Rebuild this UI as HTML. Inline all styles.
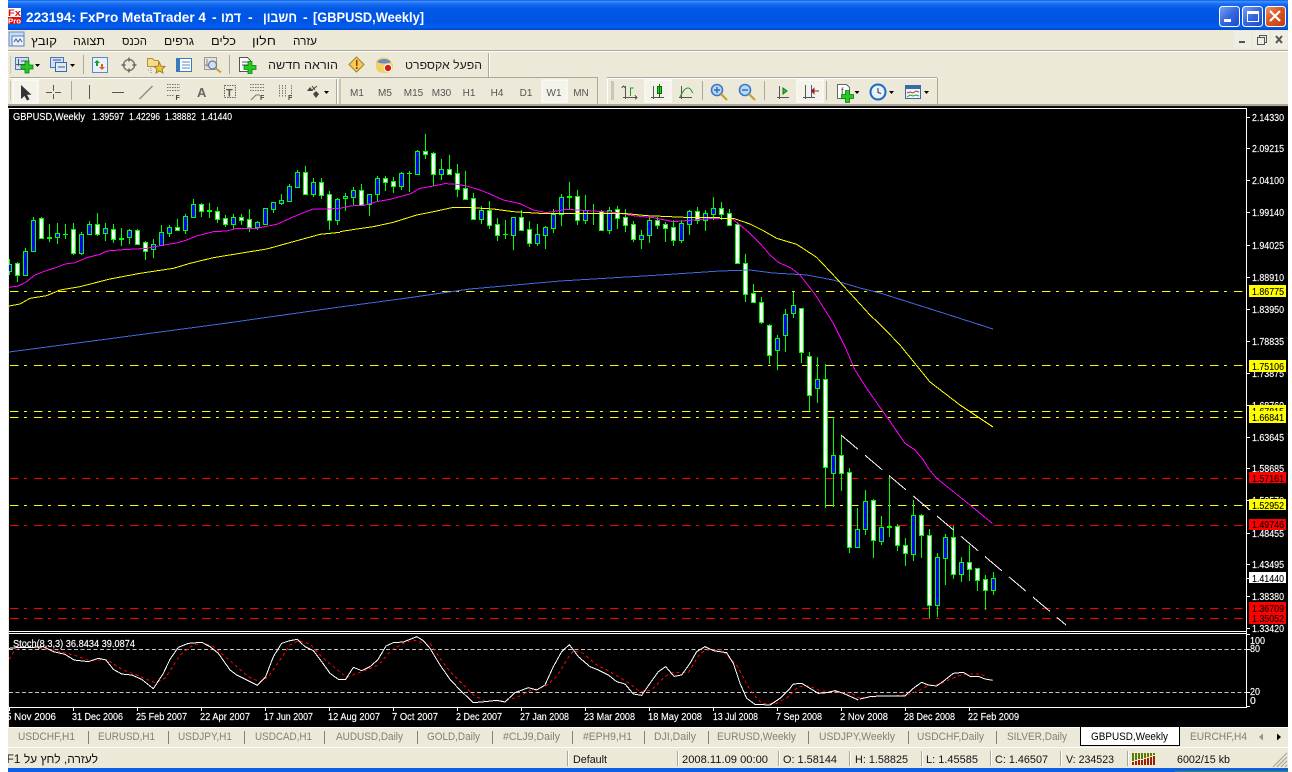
<!DOCTYPE html>
<html lang="he"><head><meta charset="utf-8"><title>MetaTrader 4</title>
<style>
html,body{margin:0;padding:0;background:#fff;width:1292px;height:772px;overflow:hidden}
svg{display:block;font-family:"Liberation Sans","Noto Sans CJK JP",sans-serif}
.ax text,.ax{font-size:10.5px;fill:#fff;stroke:#fff;stroke-width:.15px}
.tg text{font-size:10.5px;fill:#000;stroke:#000;stroke-width:.1px}
.lb{stroke:#fff;stroke-width:.15px}
.tb{font-size:11px;fill:#808078}
.st{font-size:11px;fill:#111}
.pr{font-size:10px;fill:#555}
.mn{font-size:12px;fill:#111}
.c{shape-rendering:crispEdges}
</style></head><body>
<svg width="1292" height="772" viewBox="0 0 1292 772" xmlns="http://www.w3.org/2000/svg">
<defs>
<linearGradient id="tg" x1="0" y1="0" x2="0" y2="1"><stop offset="0" stop-color="#0a58e0"/><stop offset=".05" stop-color="#3d93ff"/><stop offset=".13" stop-color="#1a6cf0"/><stop offset=".3" stop-color="#0058e6"/><stop offset=".75" stop-color="#0054e3"/><stop offset=".88" stop-color="#0060f4"/><stop offset="1" stop-color="#0347c8"/></linearGradient>
<linearGradient id="bb" x1="0" y1="0" x2="1" y2="1"><stop offset="0" stop-color="#7ba3f0"/><stop offset=".5" stop-color="#3566e0"/><stop offset="1" stop-color="#1a48c8"/></linearGradient>
<linearGradient id="br" x1="0" y1="0" x2="1" y2="1"><stop offset="0" stop-color="#e8a070"/><stop offset=".4" stop-color="#dc5a28"/><stop offset="1" stop-color="#c03a10"/></linearGradient>
<clipPath id="cc"><rect x="9" y="110" width="1237" height="521"/></clipPath>
<clipPath id="cs"><rect x="9" y="634" width="1237" height="73"/></clipPath>
<clipPath id="cl"><rect x="8" y="708" width="1240" height="18"/></clipPath>
<clipPath id="cst"><rect x="8" y="749" width="540" height="19"/></clipPath>
<g id="plus"><path d="M4 0h4v4h4v4H8v4H4V8H0V4h4z" fill="#22cc22" stroke="#0f7a0f" stroke-width=".8"/></g>
<path id="caret" d="M0 0h5l-2.500 3z" fill="#000"/>
</defs>

<!-- window -->
<rect x="8" y="0" width="1280" height="772" fill="#ece9d8"/>
<rect x="8" y="0" width="1280" height="30" fill="url(#tg)"/>
<!-- app icon -->
<rect x="8" y="8" width="13" height="16" fill="#fff"/>
<text x="8" y="16" font-size="9" font-weight="bold" fill="#e01010" textLength="13" lengthAdjust="spacingAndGlyphs">Fx</text>
<rect x="8" y="17" width="13" height="7" fill="#e01010"/>
<text x="8" y="23.500" font-size="7" font-weight="bold" fill="#fff" textLength="13" lengthAdjust="spacingAndGlyphs">Pro</text>
<!-- title -->
<g fill="#fff" font-weight="bold" font-size="14">
<text x="26" y="22" textLength="180" lengthAdjust="spacingAndGlyphs">223194: FxPro MetaTrader 4</text>
<text x="212" y="22">-</text>
<text x="221" y="22" textLength="20" lengthAdjust="spacingAndGlyphs">דמו</text>
<text x="248" y="22">-</text>
<text x="263" y="22" textLength="34" lengthAdjust="spacingAndGlyphs">חשבון</text>
<text x="303" y="22">-</text>
<text x="313" y="22" textLength="111" lengthAdjust="spacingAndGlyphs">[GBPUSD,Weekly]</text>
</g>
<!-- window buttons -->
<rect x="1219.500" y="6.500" width="20" height="20" rx="3" fill="url(#bb)" stroke="#fff"/>
<rect x="1224" y="19" width="7" height="3" fill="#fff"/>
<rect x="1242.500" y="6.500" width="20" height="20" rx="3" fill="url(#bb)" stroke="#fff"/>
<path d="M1247.500 11.500h11v10h-11z" fill="none" stroke="#fff"/><rect x="1247" y="11" width="12" height="3" fill="#fff"/>
<rect x="1265.500" y="6.500" width="20" height="20" rx="3" fill="url(#br)" stroke="#fff"/>
<path d="M1270 11l10 10M1280 11l-10 10" stroke="#fff" stroke-width="2.200"/>

<!-- menu -->
<g>
<rect x="9" y="32" width="15" height="14" fill="#c8daf4" stroke="#6a8fc8"/><rect x="12" y="36" width="12" height="10" fill="#e8f0fa" stroke="#5b7fb8"/><path d="M14 42l2-3 2 3 2-3 2 3" stroke="#3a5a98" fill="none"/>
</g>
<g class="mn">
<text x="31" y="45" textLength="26" lengthAdjust="spacingAndGlyphs">קובץ</text>
<text x="73" y="45" textLength="32" lengthAdjust="spacingAndGlyphs">תצוגה</text>
<text x="122" y="45" textLength="25" lengthAdjust="spacingAndGlyphs">הכנס</text>
<text x="164" y="45" textLength="30" lengthAdjust="spacingAndGlyphs">גרפים</text>
<text x="211" y="45" textLength="25" lengthAdjust="spacingAndGlyphs">כלים</text>
<text x="252" y="45" textLength="24" lengthAdjust="spacingAndGlyphs">חלון</text>
<text x="293" y="45" textLength="24" lengthAdjust="spacingAndGlyphs">עזרה</text>
</g>
<!-- MDI buttons -->
<g class="c">
<rect x="1234" y="31" width="17" height="17" fill="#f0eee2"/><rect x="1253" y="31" width="16" height="17" fill="#f0eee2"/><rect x="1271" y="31" width="16" height="17" fill="#f0eee2"/>
<rect x="1239" y="41" width="6" height="2" fill="#555"/>
<path d="M1257.500 37.500h7v7h-7zM1259.500 37.500v-2h7v7h-2" fill="none" stroke="#555"/>
</g>
<path d="M1276 36l6 7M1282 36l-6 7" stroke="#555" stroke-width="2"/>

<!-- toolbar separators -->
<g class="c">
<rect x="8" y="50" width="1280" height="1" fill="#aca899"/><rect x="8" y="51" width="1280" height="1" fill="#fff"/>
<rect x="10" y="77" width="478" height="1" fill="#aca899"/><rect x="10" y="78" width="328" height="1" fill="#fff"/>
<rect x="488" y="53" width="1" height="24" fill="#aca899"/><rect x="489" y="53" width="1" height="24" fill="#fff"/>
<rect x="607" y="77" width="330" height="1" fill="#aca899"/><rect x="607" y="78" width="330" height="1" fill="#fff"/>
<rect x="336" y="79" width="1" height="25" fill="#aca899"/><rect x="337" y="79" width="1" height="25" fill="#fff"/>
<rect x="339" y="79" width="2" height="25" fill="#c9c6b6"/>
<rect x="339" y="77" width="259" height="1" fill="#aca899"/>
<rect x="597" y="78" width="1" height="26" fill="#aca899"/><rect x="607" y="78" width="1" height="26" fill="#fff"/>
<rect x="937" y="78" width="1" height="26" fill="#aca899"/>
<rect x="611" y="81" width="3" height="19" fill="#c9c6b6"/>
<rect x="10" y="56" width="1" height="18" fill="#c9c6b6"/><rect x="10" y="81" width="1" height="19" fill="#c9c6b6"/>
<rect x="83" y="55" width="1" height="19" fill="#aca899"/><rect x="229" y="55" width="1" height="19" fill="#aca899"/>
<rect x="71" y="81" width="1" height="19" fill="#aca899"/>
<rect x="702" y="81" width="1" height="19" fill="#aca899"/><rect x="764" y="81" width="1" height="19" fill="#aca899"/><rect x="826" y="81" width="1" height="19" fill="#aca899"/>
<rect x="8" y="104" width="1280" height="2" fill="#aca899"/>
<rect x="8" y="106" width="1280" height="2" fill="#111"/>
<!-- selected buttons -->
<rect x="13" y="80" width="25" height="23" fill="#f4f3ea" stroke="#fff"/>
<rect x="542" y="80" width="25" height="22" fill="#f4f3ea" stroke="#fff"/>
<rect x="645" y="80" width="26" height="22" fill="#f4f3ea" stroke="#fff"/>
<rect x="797" y="80" width="26" height="22" fill="#f4f3ea" stroke="#fff"/>
</g>

<!-- toolbar 1 icons -->
<g>
<rect x="15.500" y="57.500" width="13" height="12" fill="#cfe0f6" stroke="#4a78b8"/><path d="M18.500 59v7M16 64.500h10M21 61h6" stroke="#4a5a70" fill="none"/>
<use href="#plus" x="21" y="61"/>
<use href="#caret" x="35" y="64"/>
<rect x="50.500" y="57.500" width="13" height="10" fill="#cfe0f6" stroke="#4a78b8"/><rect x="55.500" y="62.500" width="11" height="9" fill="#dfeaf8" stroke="#3a68a8"/><path d="M53 60h8M58 67h7" stroke="#4a5a70"/>
<use href="#caret" x="70" y="64"/>
<rect x="92.500" y="57.500" width="15" height="15" fill="#e8f0fa" stroke="#5b8ac8"/><path d="M97 60l3 3h-2v3h-2v-3h-2z" fill="#18a018"/><path d="M102 70l-3-3h2v-3h2v3h2z" fill="#e06020"/>
<circle cx="129" cy="65" r="5.500" fill="none" stroke="#777" stroke-width="1.500"/><path d="M129 57.500v4M129 68.500v4M121.500 65h4M132.500 65h4" stroke="#666" stroke-width="1.500"/>
<path d="M147.500 58.500h5l2 2h4v6h-11z" fill="#f4dc8a" stroke="#b09040"/><path d="M151 68v5M148 70h2" stroke="#888" stroke-dasharray="1 1"/>
<path d="M159.500 62.500L161 66.300 165 66.500 162 69.300 163 73 159.500 71 156 73 157 69.300 154 66.500 158 66.300z" fill="#f0c840" stroke="#a08020"/>
<rect x="176.500" y="58.500" width="15" height="13" fill="#fff" stroke="#3a78c0"/><rect x="177" y="59" width="3" height="12" fill="#3a78c0"/><path d="M182 62h8M182 65h8M182 68h8" stroke="#5a88c8"/>
<rect x="204.500" y="57.500" width="12" height="12" fill="#e6e6e0" stroke="#999"/><path d="M207 59v8M205 65h10" stroke="#888"/><circle cx="212.500" cy="65" r="4" fill="#cfe0f6" stroke="#6a7a90" stroke-width="1.200"/><path d="M216 68.500l5 4" stroke="#c8a030" stroke-width="2"/>
<path d="M239.500 57.500h8l3 3v11h-11z" fill="#fff" stroke="#555"/><path d="M242 62h6M242 65h6" stroke="#555"/><use href="#plus" x="244" y="61.500"/>
<text x="268" y="69" font-size="11.500" fill="#222" textLength="70" lengthAdjust="spacingAndGlyphs">הוראה חדשה</text>
<path d="M356.500 57l7.500 7.500-7.500 7.500-7.500-7.500z" fill="#f4cc50" stroke="#a08030"/><rect x="356" y="60" width="1.500" height="6" fill="#a03010"/><rect x="356" y="67" width="1.500" height="2" fill="#a03010"/>
<path d="M376 62c2-6 13-6 15 0l2 2v4c-1 4-4 5-8 5s-8-1-9-5z" fill="#f0d068"/><path d="M377 62c3-4 11-4 14 0-4 2-10 2-14 0z" fill="#6a8ac8"/><circle cx="388" cy="68" r="3.700" fill="#d02010" stroke="#fff" stroke-width="1"/>
<text x="405" y="69" font-size="11.500" fill="#222" textLength="77" lengthAdjust="spacingAndGlyphs">הפעל אקספרט</text>
</g>

<!-- toolbar 2 icons -->
<g>
<path d="M21 85v14l3.500-3 2.500 4.500 2.500-1.300-2.500-4.500h4.500z" fill="#333"/>
<path d="M53.500 85v6M53.500 94v5M46 92.500h6M55 92.500h6" stroke="#555" fill="none" class="c"/>
<path d="M89.500 85v14" stroke="#555" stroke-width="1.300" class="c"/>
<path d="M112 92.500h12" stroke="#555" stroke-width="1.300" class="c"/>
<path d="M139.500 99l13-13" stroke="#888" stroke-width="1.300"/>
<path d="M167 84.500h13M167 87.500h13M167 90.500h13M167 95.500h7" stroke="#777" stroke-dasharray="1.500 1" class="c"/>
<text x="175.500" y="100" font-size="7" font-weight="bold" fill="#444">F</text>
<text x="197" y="97" font-size="13" font-weight="bold" fill="#666">A</text>
<rect x="224.500" y="85.500" width="11" height="12" fill="none" stroke="#666" stroke-dasharray="1.500 1" class="c"/>
<text x="226" y="96.500" font-size="11" font-weight="bold" fill="#555">T</text>
<path d="M250 84.500h15M250 87.500h15M250 90.500h15" stroke="#777" stroke-dasharray="1.500 1" class="c"/><path d="M251 100l5-5 4 0" stroke="#777" fill="none"/>
<text x="260" y="100" font-size="7" font-weight="bold" fill="#444">F</text>
<path d="M279.500 85v12M282.500 85v12M285.500 85v12M291.500 85v12" stroke="#777" stroke-dasharray="1.500 1" class="c"/>
<text x="288" y="100" font-size="7" font-weight="bold" fill="#444">F</text>
<path d="M307 91l3-4 3 4zM313 94l3 4 3-4-3-3z" fill="#444"/><path d="M312 86l3 4M312 90l5-4" stroke="#444"/>
<use href="#caret" x="324" y="91"/>
</g>
<g class="pr" text-anchor="middle">
<text x="357" y="96">M1</text><text x="385" y="96">M5</text><text x="413.500" y="96">M15</text><text x="441.500" y="96">M30</text><text x="469" y="96">H1</text><text x="497" y="96">H4</text><text x="526" y="96">D1</text><text x="554" y="96">W1</text><text x="581" y="96">MN</text>
</g>

<!-- toolbar 3 icons -->
<g fill="none" stroke="#555">
<path d="M625.500 86v13M623 97.500h13M621.500 88l2-2 2 2M635 95.500l2 2-2 2" class="c"/>
<path d="M630.500 96v-8h3" stroke="#18a018" stroke-width="1.300" class="c"/>
<path d="M653.500 86v13M651 97.500h13" class="c"/><rect x="657.500" y="86.500" width="4" height="7" fill="#2fd02f" stroke="#0a6a0a" class="c"/><path d="M659.500 84v13" stroke="#0a6a0a" class="c"/>
<path d="M681.500 86v13M679 97.500h13" class="c"/><path d="M680 97c3-6 5-9 8-9s3 3 5 5" stroke="#2a9a2a"/>
<path d="M779.500 86v13M777 97.500h12" class="c"/><path d="M783 88v6l4-3z" fill="#2fd02f" stroke="#0a7a0a"/>
<path d="M805.500 85v14M803 97.500h12" class="c"/><path d="M811.500 85v13" stroke="#3a5aa8" class="c"/><path d="M819 91l-5 0M814 88.500v5l-2.500-2.500z" stroke="#a02010" fill="#a02010"/>
</g>
<g>
<circle cx="717" cy="90" r="5.500" fill="#bcd6f4" stroke="#3a78c8" stroke-width="1.600"/><path d="M714 90h6M717 87v6" stroke="#2a68b8" stroke-width="1.400"/><path d="M721 94l6 6" stroke="#c8a030" stroke-width="2.200"/>
<circle cx="745" cy="90" r="5.500" fill="#bcd6f4" stroke="#3a78c8" stroke-width="1.600"/><path d="M742 90h6" stroke="#2a68b8" stroke-width="1.400"/><path d="M749 94l6 6" stroke="#c8a030" stroke-width="2.200"/>
<path d="M837.500 84.500h9l3 3v11h-12z" fill="#fff" stroke="#666"/><text x="841" y="94" font-size="9" fill="#444">f</text><use href="#plus" x="841.500" y="90.500"/>
<use href="#caret" x="854.500" y="91"/>
<circle cx="878" cy="92" r="7.500" fill="#e8f0fa" stroke="#1a68c8" stroke-width="2"/><path d="M878 88v4.500l3 1" stroke="#333" fill="none"/>
<use href="#caret" x="889" y="91"/>
<rect x="905.500" y="85.500" width="15" height="13" fill="#eef4fb" stroke="#3a68a8"/><rect x="906" y="86" width="14" height="3" fill="#3a68a8"/><path d="M907 93l3-1 3 1 3-2 3 1" stroke="#b04020" fill="none"/><path d="M907 97l3-2 3 1 3-1 3 1" stroke="#2a9a2a" fill="none"/>
<use href="#caret" x="924" y="91"/>
</g>

<!-- chart -->
<rect x="9" y="107" width="1279" height="620" fill="#000"/>
<g class="c" fill="#fff">
<rect x="9" y="108" width="1238" height="1"/>
<rect x="9" y="631" width="1238" height="1"/>
<rect x="9" y="633" width="1238" height="1"/>
<rect x="9" y="707" width="1238" height="1"/>
<rect x="1246" y="108" width="1" height="600"/>
</g>

<g clip-path="url(#cc)" class="c" fill="none" stroke-width="1">
<!-- horizontal levels -->
<g stroke-dasharray="3 7 8.500 5.500" stroke-dashoffset="9">
<path d="M9 291.500H1246M9 365.500H1246M9 411.500H1246M9 417.500H1246M9 505.500H1246" stroke="#ffff00"/>
<path d="M9 478.500H1246M9 525.500H1246M9 608.500H1246M9 618.500H1246" stroke="#ff0000"/>
</g>
<!-- wicks -->
<path stroke="#00ff00" d="M9.500 259V275M17.500 262V282M25.500 248V276M33.500 217V252M41.500 217V238M49.500 224V242M57.500 223V244M65.500 224V239M73.500 223V255M81.500 232V255M89.500 221V235M97.500 213V236M105.500 223V241M113.500 224V243M121.500 228V246M129.500 229V244M137.500 229V244M145.500 241V260M153.500 239V258M161.500 225V246M169.500 225V237M177.500 219V231M185.500 214V234M193.500 199V218M201.500 203V217M209.500 203V218M217.500 207V223M225.500 215V227M233.500 214V229M241.500 214V225M249.500 209V232M257.500 221V230M265.500 208V224M273.500 202V213M281.500 194V205M289.500 184V202M297.500 170V188M305.500 166V194M313.500 178V197M321.500 178V199M329.500 191V230M337.500 198V225M345.500 193V211M353.500 187V205M361.500 184V205M369.500 194V216M377.500 176V202M385.500 176V191M393.500 177V193M401.500 172V190M409.500 171V192M417.500 150V175M425.500 134V159M433.500 152V186M441.500 159V180M449.500 155V174M457.500 164V197M465.500 171V199M473.500 193V220M481.500 206V224M489.500 201V229M497.500 218V241M505.500 220V239M513.500 217V250M521.500 210V230M529.500 221V247M537.500 224V246M545.500 226V249M553.500 209V233M561.500 194V226M569.500 182V209M577.500 190V225M585.500 195V224M593.500 204V225M601.500 210V230M609.500 207V234M617.500 206V229M625.500 209V232M633.500 221V242M641.500 230V249M649.500 218V243M657.500 217V229M665.500 222V242M673.500 220V246M681.500 220V243M689.500 210V235M697.500 207V224M705.500 210V231M713.500 197V220M721.500 202V220M729.500 209V225M737.500 222V264M745.500 254V302M753.500 284V302M761.500 297V324M769.500 324V364M777.500 335V370M785.500 309V352M793.500 292V318M801.500 308V363M809.500 352V411M817.500 357V403M825.500 364V508M833.500 417V507M841.500 435V491M849.500 468V553M857.500 508V547M865.500 490V535M873.500 499V558M881.500 516V545M889.500 476V537M897.500 524V551M905.500 538V566M913.500 500V561M921.500 514V558M929.500 529V618M937.500 553V617M945.500 534V585M953.500 526V579M961.500 557V582M969.500 545V581M977.500 568V591M985.500 575V610M993.500 572V595"/>
<!-- white bodies -->
<path stroke="#00ff00" fill="#fff" d="M15.500 263.500h4v12h-4zM39.500 218.500h4v20h-4zM71.500 229.500h4v24h-4zM95.500 224.500h4v10h-4zM111.500 229.500h4v10h-4zM135.500 230.500h4v14h-4zM143.500 242.500h4v9h-4zM175.500 227.500h4v3h-4zM199.500 204.500h4v7h-4zM215.500 211.500h4v8h-4zM223.500 218.500h4v6h-4zM239.500 217.500h4v3h-4zM247.500 219.500h4v8h-4zM303.500 172.500h4v22h-4zM319.500 182.500h4v13h-4zM327.500 194.500h4v26h-4zM359.500 190.500h4v15h-4zM383.500 178.500h4v4h-4zM391.500 181.500h4v5h-4zM423.500 151.500h4v3h-4zM431.500 153.500h4v21h-4zM447.500 169.500h4v5h-4zM455.500 173.500h4v16h-4zM463.500 188.500h4v11h-4zM471.500 198.500h4v21h-4zM487.500 210.500h4v15h-4zM495.500 224.500h4v11h-4zM519.500 217.500h4v13h-4zM527.500 229.500h4v14h-4zM575.500 196.500h4v24h-4zM599.500 211.500h4v19h-4zM615.500 209.500h4v9h-4zM623.500 217.500h4v8h-4zM631.500 224.500h4v15h-4zM655.500 220.500h4v5h-4zM663.500 224.500h4v4h-4zM671.500 227.500h4v13h-4zM695.500 211.500h4v9h-4zM719.500 208.500h4v6h-4zM727.500 213.500h4v12h-4zM735.500 224.500h4v39h-4zM743.500 263.500h4v31h-4zM751.500 293.500h4v9h-4zM759.500 302.500h4v20h-4zM767.500 325.500h4v30h-4zM799.500 308.500h4v44h-4zM807.500 356.500h4v39h-4zM823.500 379.500h4v88h-4zM839.500 455.500h4v18h-4zM847.500 472.500h4v75h-4zM871.500 500.500h4v40h-4zM895.500 526.500h4v19h-4zM903.500 545.500h4v8h-4zM919.500 515.500h4v20h-4zM927.500 535.500h4v70h-4zM951.500 537.500h4v37h-4zM967.500 562.500h4v7h-4zM975.500 568.500h4v12h-4zM983.500 579.500h4v11h-4z"/>
<!-- blue bodies -->
<path stroke="#00ff00" fill="#0000ff" d="M7.500 264.500h4v7h-4zM23.500 251.500h4v24h-4zM31.500 220.500h4v31h-4zM55.500 233.500h4v4h-4zM79.500 234.500h4v19h-4zM87.500 224.500h4v10h-4zM103.500 228.500h4v5h-4zM127.500 230.500h4v7h-4zM151.500 244.500h4v5h-4zM159.500 232.500h4v13h-4zM167.500 227.500h4v6h-4zM183.500 216.500h4v14h-4zM191.500 204.500h4v13h-4zM231.500 217.500h4v7h-4zM255.500 222.500h4v5h-4zM263.500 208.500h4v16h-4zM271.500 202.500h4v7h-4zM279.500 200.500h4v3h-4zM287.500 186.500h4v15h-4zM295.500 172.500h4v15h-4zM311.500 182.500h4v12h-4zM335.500 199.500h4v21h-4zM343.500 196.500h4v2h-4zM351.500 190.500h4v7h-4zM367.500 194.500h4v10h-4zM375.500 178.500h4v16h-4zM399.500 173.500h4v13h-4zM415.500 151.500h4v23h-4zM439.500 169.500h4v5h-4zM479.500 210.500h4v9h-4zM511.500 217.500h4v18h-4zM535.500 234.500h4v9h-4zM543.500 227.500h4v8h-4zM551.500 214.500h4v14h-4zM559.500 197.500h4v17h-4zM583.500 210.500h4v10h-4zM607.500 210.500h4v20h-4zM639.500 235.500h4v4h-4zM647.500 220.500h4v15h-4zM679.500 223.500h4v17h-4zM687.500 211.500h4v13h-4zM703.500 213.500h4v7h-4zM711.500 208.500h4v6h-4zM775.500 338.500h4v12h-4zM783.500 314.500h4v21h-4zM791.500 305.500h4v8h-4zM815.500 379.500h4v9h-4zM831.500 455.500h4v18h-4zM855.500 529.500h4v18h-4zM863.500 501.500h4v28h-4zM879.500 527.500h4v14h-4zM911.500 515.500h4v39h-4zM935.500 557.500h4v48h-4zM943.500 537.500h4v21h-4zM959.500 562.500h4v12h-4zM991.500 578.500h4v12h-4z"/>
<!-- doji -->
<g fill="#00ff00" stroke="none"><rect x="47" y="237" width="5" height="2"/><rect x="63" y="234" width="5" height="1"/><rect x="119" y="238" width="5" height="2"/><rect x="207" y="210" width="5" height="2"/><rect x="407" y="173" width="5" height="1"/><rect x="503" y="234" width="5" height="1"/><rect x="567" y="196" width="5" height="2"/><rect x="887" y="526" width="5" height="2"/></g>
<!-- MA blue -->
<polyline stroke="#4169e1" points="9,352 100,340 220,324 340,307 400,299 470,289 560,281 660,275 720,271 750,270 773,273 807,275 833,280 860,288 880,293 940,312 993,329"/>
<!-- MA magenta -->
<g stroke="#ff00ff" stroke-width="3" transform="translate(0,105) scale(.33333)"><polyline points="27,547 55,543 80,530 105,510 130,500 170,487 195,477 225,473 260,458 300,448 320,438 370,434 440,430 480,422 530,414 560,405 590,393 640,380 680,378 710,370 770,370 830,358 870,340 900,327 940,312 985,312 1020,310"/></g>
<g stroke="#ff00ff" stroke-width="3" transform="translate(340,125) scale(.33333)"><polyline points="0,250 30,243 75,240 110,230 150,223 180,215 210,207 240,190 280,183 315,176 345,177 380,183 420,195 450,207 490,225 540,236 580,255 620,263 680,253 760,258 830,263 880,272 940,278 1000,290 1060,285 1120,280 1170,280"/></g>
<g stroke="#ff00ff" stroke-width="3" transform="translate(720,200) scale(.33333)"><polyline points="0,55 35,55 60,75 90,100 120,130 150,165 175,187 215,205 240,225 290,290 340,370 375,440 405,510 440,565 480,622 528,690"/></g>
<g stroke="#ff00ff" stroke-width="3" transform="translate(830,430) scale(.33333)"><polyline points="198,0 225,40 255,60 280,90 295,115 320,145 370,185 420,225 487,280"/></g>
<!-- MA yellow -->
<g stroke="#ffff00" stroke-width="3" transform="translate(0,105) scale(.33333)"><polyline points="27,603 60,597 90,580 140,572 180,555 240,545 330,522 420,505 520,490 570,475 640,458 720,445 800,432 880,410 960,388 1020,382"/></g>
<g stroke="#ffff00" stroke-width="3" transform="translate(340,125) scale(.33333)"><polyline points="0,320 50,312 100,305 160,292 230,270 290,258 340,247 390,248 460,252 520,260 600,265 700,265 850,265 920,272 990,275 1060,278 1140,278"/></g>
<g stroke="#ffff00" stroke-width="3" transform="translate(720,200) scale(.33333)"><polyline points="0,55 40,55 90,72 130,92 170,115 230,133 290,172 340,225 400,290 450,345 480,373 540,435 630,546 720,615 819,681"/></g>
<!-- trendline -->
<path stroke="#fff" stroke-dasharray="22.300 9.100" d="M841 435L1066 625"/>
</g>

<!-- stochastic -->
<g clip-path="url(#cs)" fill="none">
<path d="M9 649.500H1246M9 692.500H1246" stroke="#c8c8c8" stroke-dasharray="4 2.500" class="c"/>
<g class="c" stroke-width="3">
<g transform="translate(0,620) scale(.33333)">
<polyline stroke="#ff0000" stroke-dasharray="9 9" points="27,118 45,90 70,80 130,85 180,95 230,108 270,122 320,118 345,135 375,152 410,165 440,178 465,188 495,175 515,145 540,105 575,78 605,67 640,80 670,105 710,140 745,170 780,186 805,170 840,120 870,75 895,62 930,72 960,105 1000,140 1040,172 1085,155 1135,135 1175,90 1210,70 1240,60 1290,75"/>
<polyline stroke="#fff" points="27,85 60,82 100,82 130,80 160,95 195,103 222,120 265,125 295,115 318,120 340,148 365,162 395,165 425,178 460,206 490,160 510,118 535,82 565,70 605,67 630,80 655,100 690,150 710,165 772,196 797,170 820,110 845,70 870,62 892,58 915,80 940,92 965,125 990,160 1015,178 1037,178 1060,142 1085,152 1110,140 1133,120 1158,78 1180,68 1210,66 1250,50 1270,62 1290,85"/>
</g>
<g transform="translate(430,620) scale(.33333)">
<polyline stroke="#ff0000" stroke-dasharray="9 9" points="0,70 30,115 60,155 90,185 130,225 165,243 200,243 225,243 265,230 300,212 345,200 380,170 410,120 430,92 460,100 500,135 540,155 590,185 630,215 665,210 705,170 725,158 775,158 810,100 830,90 875,90 920,135 960,210 995,250 1040,250 1075,230 1105,200 1135,197 1170,212 1215,215 1265,220 1290,235"/>
<polyline stroke="#fff" points="0,85 30,135 60,178 90,210 130,248 165,245 200,241 225,246 255,218 295,203 320,210 345,195 370,140 395,95 418,74 445,110 480,140 505,150 535,165 560,185 585,192 610,222 635,226 660,190 685,155 707,140 732,169 755,165 780,130 800,95 825,80 850,92 890,98 910,130 930,190 950,235 975,253 1020,255 1050,235 1080,205 1090,192 1115,190 1165,220 1190,218 1215,212 1240,220 1285,240"/>
</g>
<g transform="translate(860,620) scale(.33333)">
<polyline stroke="#ff0000" stroke-dasharray="9 9" points="0,235 60,228 100,228 140,225 170,215 205,197 240,192 270,178 295,168 320,162 360,162 385,172"/>
<polyline stroke="#fff" points="0,237 30,230 60,228 100,228 135,228 160,205 185,187 205,195 230,198 255,180 280,160 310,157 330,169 355,169 375,177 398,181"/>
</g>
</g>
</g>

<!-- chart labels -->
<g fill="#fff" font-size="10.500" class="lb">
<text x="13" y="120" textLength="72" lengthAdjust="spacingAndGlyphs">GBPUSD,Weekly</text>
<text x="92" y="120" textLength="32" lengthAdjust="spacingAndGlyphs">1.39597</text>
<text x="129" y="120" textLength="31" lengthAdjust="spacingAndGlyphs">1.42296</text>
<text x="165" y="120" textLength="31" lengthAdjust="spacingAndGlyphs">1.38882</text>
<text x="201" y="120" textLength="31" lengthAdjust="spacingAndGlyphs">1.41440</text>
<text x="13" y="647" textLength="122" lengthAdjust="spacingAndGlyphs">Stoch(8,3,3) 36.8434 39.0874</text>
</g>

<!-- price axis -->
<g class="c" fill="#fff">
<rect x="1247" y="117" width="3" height="1"/><rect x="1247" y="148" width="3" height="1"/><rect x="1247" y="180" width="3" height="1"/><rect x="1247" y="212" width="3" height="1"/><rect x="1247" y="245" width="3" height="1"/><rect x="1247" y="277" width="3" height="1"/><rect x="1247" y="309" width="3" height="1"/><rect x="1247" y="341" width="3" height="1"/><rect x="1247" y="373" width="3" height="1"/><rect x="1247" y="405" width="3" height="1"/><rect x="1247" y="437" width="3" height="1"/><rect x="1247" y="468" width="3" height="1"/><rect x="1247" y="500" width="3" height="1"/><rect x="1247" y="533" width="3" height="1"/><rect x="1247" y="564" width="3" height="1"/><rect x="1247" y="596" width="3" height="1"/><rect x="1247" y="628" width="3" height="1"/><rect x="1247" y="578" width="2" height="1"/>
<rect x="1247" y="634" width="3" height="1"/><rect x="1247" y="649" width="3" height="1"/><rect x="1247" y="692" width="3" height="1"/><rect x="1247" y="706" width="3" height="1"/>
</g>
<g class="ax">
<text x="1252" y="121" textLength="32" lengthAdjust="spacingAndGlyphs">2.14330</text>
<text x="1252" y="152" textLength="32" lengthAdjust="spacingAndGlyphs">2.09215</text>
<text x="1252" y="184" textLength="32" lengthAdjust="spacingAndGlyphs">2.04100</text>
<text x="1252" y="216" textLength="32" lengthAdjust="spacingAndGlyphs">1.99140</text>
<text x="1252" y="249" textLength="32" lengthAdjust="spacingAndGlyphs">1.94025</text>
<text x="1252" y="281" textLength="32" lengthAdjust="spacingAndGlyphs">1.88910</text>
<text x="1252" y="313" textLength="32" lengthAdjust="spacingAndGlyphs">1.83950</text>
<text x="1252" y="345" textLength="32" lengthAdjust="spacingAndGlyphs">1.78835</text>
<text x="1252" y="377" textLength="32" lengthAdjust="spacingAndGlyphs">1.73875</text>
<text x="1252" y="409" textLength="32" lengthAdjust="spacingAndGlyphs">1.68760</text>
<text x="1252" y="441" textLength="32" lengthAdjust="spacingAndGlyphs">1.63645</text>
<text x="1252" y="472" textLength="32" lengthAdjust="spacingAndGlyphs">1.58685</text>
<text x="1252" y="504" textLength="32" lengthAdjust="spacingAndGlyphs">1.53570</text>
<text x="1252" y="537" textLength="32" lengthAdjust="spacingAndGlyphs">1.48455</text>
<text x="1252" y="568" textLength="32" lengthAdjust="spacingAndGlyphs">1.43495</text>
<text x="1252" y="600" textLength="32" lengthAdjust="spacingAndGlyphs">1.38380</text>
<text x="1252" y="632" textLength="32" lengthAdjust="spacingAndGlyphs">1.33420</text>
<text x="1250" y="644" textLength="15" lengthAdjust="spacingAndGlyphs">100</text>
<text x="1250" y="652" textLength="10" lengthAdjust="spacingAndGlyphs">80</text>
<text x="1250" y="695" textLength="10" lengthAdjust="spacingAndGlyphs">20</text>
<text x="1250" y="704">0</text>
</g>
<!-- tags -->
<g class="tg">
<rect x="1249" y="285" width="37" height="12" fill="#ffff00" class="c"/><text x="1252" y="295" textLength="32" lengthAdjust="spacingAndGlyphs">1.86775</text>
<rect x="1249" y="360" width="37" height="12" fill="#ffff00" class="c"/><text x="1252" y="370" textLength="32" lengthAdjust="spacingAndGlyphs">1.75106</text>
<rect x="1249" y="405" width="37" height="12" fill="#ffff00" class="c"/><text x="1252" y="415" textLength="32" lengthAdjust="spacingAndGlyphs">1.67815</text>
<rect x="1249" y="411" width="37" height="12" fill="#ffff00" class="c"/><text x="1252" y="421" textLength="32" lengthAdjust="spacingAndGlyphs">1.66841</text>
<rect x="1249" y="472" width="37" height="11" fill="#ff0000" class="c"/><text x="1252" y="482" textLength="32" lengthAdjust="spacingAndGlyphs">1.57161</text>
<rect x="1249" y="499" width="37" height="11" fill="#ffff00" class="c"/><text x="1252" y="509" textLength="32" lengthAdjust="spacingAndGlyphs">1.52952</text>
<rect x="1249" y="519" width="37" height="11" fill="#ff0000" class="c"/><text x="1252" y="528" textLength="32" lengthAdjust="spacingAndGlyphs">1.49746</text>
<rect x="1249" y="572" width="37" height="11" fill="#fff" class="c"/><text x="1252" y="582" textLength="32" lengthAdjust="spacingAndGlyphs">1.41440</text>
<rect x="1249" y="602" width="37" height="11" fill="#ff0000" class="c"/><text x="1252" y="612" textLength="32" lengthAdjust="spacingAndGlyphs">1.36709</text>
<rect x="1249" y="612" width="37" height="12" fill="#ff0000" class="c"/><text x="1252" y="622" textLength="32" lengthAdjust="spacingAndGlyphs">1.35052</text>
</g>

<!-- time axis -->
<g class="c" fill="#fff">
<rect x="9" y="708" width="1" height="3"/><rect x="73" y="708" width="1" height="3"/><rect x="137" y="708" width="1" height="3"/><rect x="201" y="708" width="1" height="3"/><rect x="265" y="708" width="1" height="3"/><rect x="329" y="708" width="1" height="3"/><rect x="393" y="708" width="1" height="3"/><rect x="457" y="708" width="1" height="3"/><rect x="521" y="708" width="1" height="3"/><rect x="585" y="708" width="1" height="3"/><rect x="649" y="708" width="1" height="3"/><rect x="713" y="708" width="1" height="3"/><rect x="777" y="708" width="1" height="3"/><rect x="841" y="708" width="1" height="3"/><rect x="905" y="708" width="1" height="3"/><rect x="969" y="708" width="1" height="3"/>
</g>
<g clip-path="url(#cl)" fill="#fff" font-size="10.500" class="lb">
<text x="6" y="720" textLength="50" lengthAdjust="spacingAndGlyphs">5 Nov 2006</text>
<text x="72" y="720" textLength="51" lengthAdjust="spacingAndGlyphs">31 Dec 2006</text>
<text x="136" y="720" textLength="51" lengthAdjust="spacingAndGlyphs">25 Feb 2007</text>
<text x="200" y="720" textLength="50" lengthAdjust="spacingAndGlyphs">22 Apr 2007</text>
<text x="264" y="720" textLength="49" lengthAdjust="spacingAndGlyphs">17 Jun 2007</text>
<text x="328" y="720" textLength="52" lengthAdjust="spacingAndGlyphs">12 Aug 2007</text>
<text x="392" y="720" textLength="46" lengthAdjust="spacingAndGlyphs">7 Oct 2007</text>
<text x="456" y="720" textLength="46" lengthAdjust="spacingAndGlyphs">2 Dec 2007</text>
<text x="520" y="720" textLength="49" lengthAdjust="spacingAndGlyphs">27 Jan 2008</text>
<text x="584" y="720" textLength="51" lengthAdjust="spacingAndGlyphs">23 Mar 2008</text>
<text x="648" y="720" textLength="54" lengthAdjust="spacingAndGlyphs">18 May 2008</text>
<text x="713" y="720" textLength="45" lengthAdjust="spacingAndGlyphs">13 Jul 2008</text>
<text x="776" y="720" textLength="46" lengthAdjust="spacingAndGlyphs">7 Sep 2008</text>
<text x="840" y="720" textLength="48" lengthAdjust="spacingAndGlyphs">2 Nov 2008</text>
<text x="904" y="720" textLength="51" lengthAdjust="spacingAndGlyphs">28 Dec 2008</text>
<text x="968" y="720" textLength="51" lengthAdjust="spacingAndGlyphs">22 Feb 2009</text>
</g>

<!-- tabs -->
<rect x="8" y="727" width="1280" height="1" fill="#fff" class="c"/>
<rect x="8" y="728" width="1280" height="19" fill="#ece9d8" class="c"/>
<rect x="8" y="747" width="1280" height="1" fill="#fff" class="c"/>
<g fill="#808080" class="c">
<rect x="88" y="731" width="1" height="13"/><rect x="168" y="731" width="1" height="13"/><rect x="244" y="731" width="1" height="13"/><rect x="324" y="731" width="1" height="13"/><rect x="417" y="731" width="1" height="13"/><rect x="492" y="731" width="1" height="13"/><rect x="572" y="731" width="1" height="13"/><rect x="644" y="731" width="1" height="13"/><rect x="708" y="731" width="1" height="13"/><rect x="808" y="731" width="1" height="13"/><rect x="908" y="731" width="1" height="13"/><rect x="996" y="731" width="1" height="13"/>
</g>
<g class="c"><rect x="1080" y="727" width="100" height="19" fill="#000"/><rect x="1081" y="727" width="98" height="18" fill="#fff"/></g>
<g class="tb">
<text x="18" y="740" textLength="57" lengthAdjust="spacingAndGlyphs">USDCHF,H1</text>
<text x="98" y="740" textLength="57" lengthAdjust="spacingAndGlyphs">EURUSD,H1</text>
<text x="178" y="740" textLength="54" lengthAdjust="spacingAndGlyphs">USDJPY,H1</text>
<text x="255" y="740" textLength="57" lengthAdjust="spacingAndGlyphs">USDCAD,H1</text>
<text x="336" y="740" textLength="67" lengthAdjust="spacingAndGlyphs">AUDUSD,Daily</text>
<text x="427" y="740" textLength="53" lengthAdjust="spacingAndGlyphs">GOLD,Daily</text>
<text x="503" y="740" textLength="57" lengthAdjust="spacingAndGlyphs">#CLJ9,Daily</text>
<text x="583" y="740" textLength="49" lengthAdjust="spacingAndGlyphs">#EPH9,H1</text>
<text x="654" y="740" textLength="42" lengthAdjust="spacingAndGlyphs">DJI,Daily</text>
<text x="717" y="740" textLength="79" lengthAdjust="spacingAndGlyphs">EURUSD,Weekly</text>
<text x="819" y="740" textLength="76" lengthAdjust="spacingAndGlyphs">USDJPY,Weekly</text>
<text x="917" y="740" textLength="67" lengthAdjust="spacingAndGlyphs">USDCHF,Daily</text>
<text x="1007" y="740" textLength="60" lengthAdjust="spacingAndGlyphs">SILVER,Daily</text>
<text x="1091" y="740" textLength="77" lengthAdjust="spacingAndGlyphs" style="fill:#000">GBPUSD,Weekly</text>
<text x="1190" y="740" textLength="57" lengthAdjust="spacingAndGlyphs">EURCHF,H4</text>
</g>
<path d="M1259 737l4-3.500v7z" fill="#909090"/><path d="M1277 733.500l4 3.500-4 3.500z" fill="#000"/>

<!-- status bar -->
<g fill="#aca899" class="c">
<rect x="567" y="751" width="1" height="15"/><rect x="677" y="751" width="1" height="15"/><rect x="778" y="751" width="1" height="15"/><rect x="849" y="751" width="1" height="15"/><rect x="921" y="751" width="1" height="15"/><rect x="990" y="751" width="1" height="15"/><rect x="1060" y="751" width="1" height="15"/><rect x="1127" y="751" width="1" height="15"/>
</g>
<g fill="#fff" class="c">
<rect x="568" y="751" width="1" height="15"/><rect x="678" y="751" width="1" height="15"/><rect x="779" y="751" width="1" height="15"/><rect x="850" y="751" width="1" height="15"/><rect x="922" y="751" width="1" height="15"/><rect x="991" y="751" width="1" height="15"/><rect x="1061" y="751" width="1" height="15"/><rect x="1128" y="751" width="1" height="15"/>
</g>
<g clip-path="url(#cst)"><text x="98" y="763" text-anchor="start" direction="rtl" font-size="12" fill="#111" style="direction:rtl;unicode-bidi:embed">לעזרה, לחץ על F1</text></g>
<g class="st">
<text x="573" y="763" textLength="34" lengthAdjust="spacingAndGlyphs">Default</text>
<text x="682" y="763" textLength="86" lengthAdjust="spacingAndGlyphs">2008.11.09 00:00</text>
<text x="783" y="763" textLength="54" lengthAdjust="spacingAndGlyphs">O: 1.58144</text>
<text x="855" y="763" textLength="53" lengthAdjust="spacingAndGlyphs">H: 1.58825</text>
<text x="926" y="763" textLength="52" lengthAdjust="spacingAndGlyphs">L: 1.45585</text>
<text x="995" y="763" textLength="53" lengthAdjust="spacingAndGlyphs">C: 1.46507</text>
<text x="1066" y="763" textLength="48" lengthAdjust="spacingAndGlyphs">V: 234523</text>
<text x="1177" y="763" textLength="53" lengthAdjust="spacingAndGlyphs">6002/15 kb</text>
</g>
<!-- connection bars -->
<g class="c">
<path d="M1132 753h2v8h-2zM1135 753h2v7h-2zM1138 753h2v6h-2zM1141 753h2v6h-2zM1144 753h2v5h-2zM1147 753h2v4h-2zM1150 753h2v3h-2zM1153 753h2v2h-2z" fill="#5a7a00"/>
<path d="M1132 762h2v3h-2zM1135 761h2v4h-2zM1138 760h2v5h-2zM1141 760h2v5h-2zM1144 759h2v6h-2zM1147 758h2v7h-2zM1150 757h2v8h-2zM1153 756h2v9h-2z" fill="#a02000"/>
</g>
<path d="M1273 767l14-14M1277 767l10-10M1281 767l6-6M1285 767l2-2" stroke="#aca899" stroke-width="1.200"/>

<!-- bottom border -->
<rect x="8" y="768" width="1280" height="4" fill="#0d5fe6" class="c"/>
<rect x="1175" y="771" width="113" height="1" fill="#3f8f3f" class="c"/>
</svg>
</body></html>
